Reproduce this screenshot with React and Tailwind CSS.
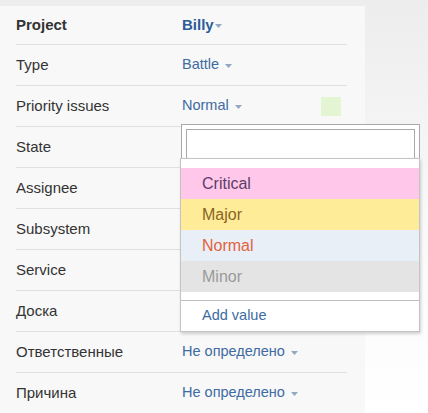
import React from "react";

function Caret({ className = "" }) {
  return (
    <svg width="7" height="4" viewBox="0 0 7 4" className={className}>
      <path d="M0 0 L7 0 L3.5 4 Z" fill="#94a7c0" />
    </svg>
  );
}

const rows = [
  { label: "Project", value: "Billy", bold: true },
  { label: "Type", value: "Battle" },
  { label: "Priority issues", value: "Normal", swatch: true },
  { label: "State" },
  { label: "Assignee" },
  { label: "Subsystem" },
  { label: "Service" },
  { label: "Доска" },
  { label: "Ответственные", value: "Не определено" },
  { label: "Причина", value: "Не определено" },
];

const options = [
  { text: "Critical", bg: "bg-[#ffc8ea]", color: "text-[#5b3d69]" },
  { text: "Major", bg: "bg-[#ffec99]", color: "text-[#8a6421]" },
  { text: "Normal", bg: "bg-[#e9eff7]", color: "text-[#e2623c]" },
  { text: "Minor", bg: "bg-[#e4e4e4]", color: "text-[#9a9a9a]" },
];

export default function App() {
  return (
    <div className="relative w-[428px] h-[413px] overflow-hidden bg-linear-to-b from-[#ededed] via-[#f8f8f8] to-white font-['Liberation_Sans',Arial,sans-serif]">
      <div className="w-[365px] h-full mt-[6px] bg-[#f8f8f8] pl-4 pr-[18px]">
        {rows.map((r, i) => (
          <div
            key={i}
            className={`flex items-center border-b border-[#e0e0e0] ${i === 0 ? "h-[39px]" : "h-[41px]"}`}
          >
            <div
              className={`w-[166px] shrink-0 text-[15px] text-[#333333] ${r.bold ? "font-bold" : ""}`}
            >
              {r.label}
            </div>
            {r.value && (
              <div className="flex flex-1 items-center">
                <span
                  className={`flex items-center ${r.bold ? "font-bold text-[15px] text-[#2c5c97] gap-[1px]" : "text-[14.5px] text-[#3d6ba2] gap-[6px]"}`}
                >
                  {r.value}
                  <Caret className="mt-[1px]" />
                </span>
                {r.swatch && (
                  <span className="ml-auto mr-[6px] w-[20px] h-[19px] bg-[#e3f5d3]" />
                )}
              </div>
            )}
          </div>
        ))}
      </div>

      {/* dropdown */}
      <div className="absolute left-[181px] top-[124px] w-[239px] h-[40px] border border-[#a9a9a9] bg-white p-[4px]">
        <div className="h-[30px] border border-[#a9a9a9] bg-white" />
      </div>
      <div className="absolute left-[180px] top-[158px] w-[240px] border border-[#c4c4c4] bg-white shadow-[1px_2px_3px_rgba(0,0,0,0.18)]">
        <div className="pt-[9px] pb-[8px]">
          {options.map((o) => (
            <div
              key={o.text}
              className={`h-[31px] flex items-center pl-[21px] text-[16px] ${o.bg} ${o.color}`}
            >
              {o.text}
            </div>
          ))}
        </div>
        <div className="h-[31px] border-t border-[#bdbdbd] flex items-center pl-[21px] text-[14.5px] text-[#3d6ba2]">
          Add value
        </div>
      </div>
    </div>
  );
}
